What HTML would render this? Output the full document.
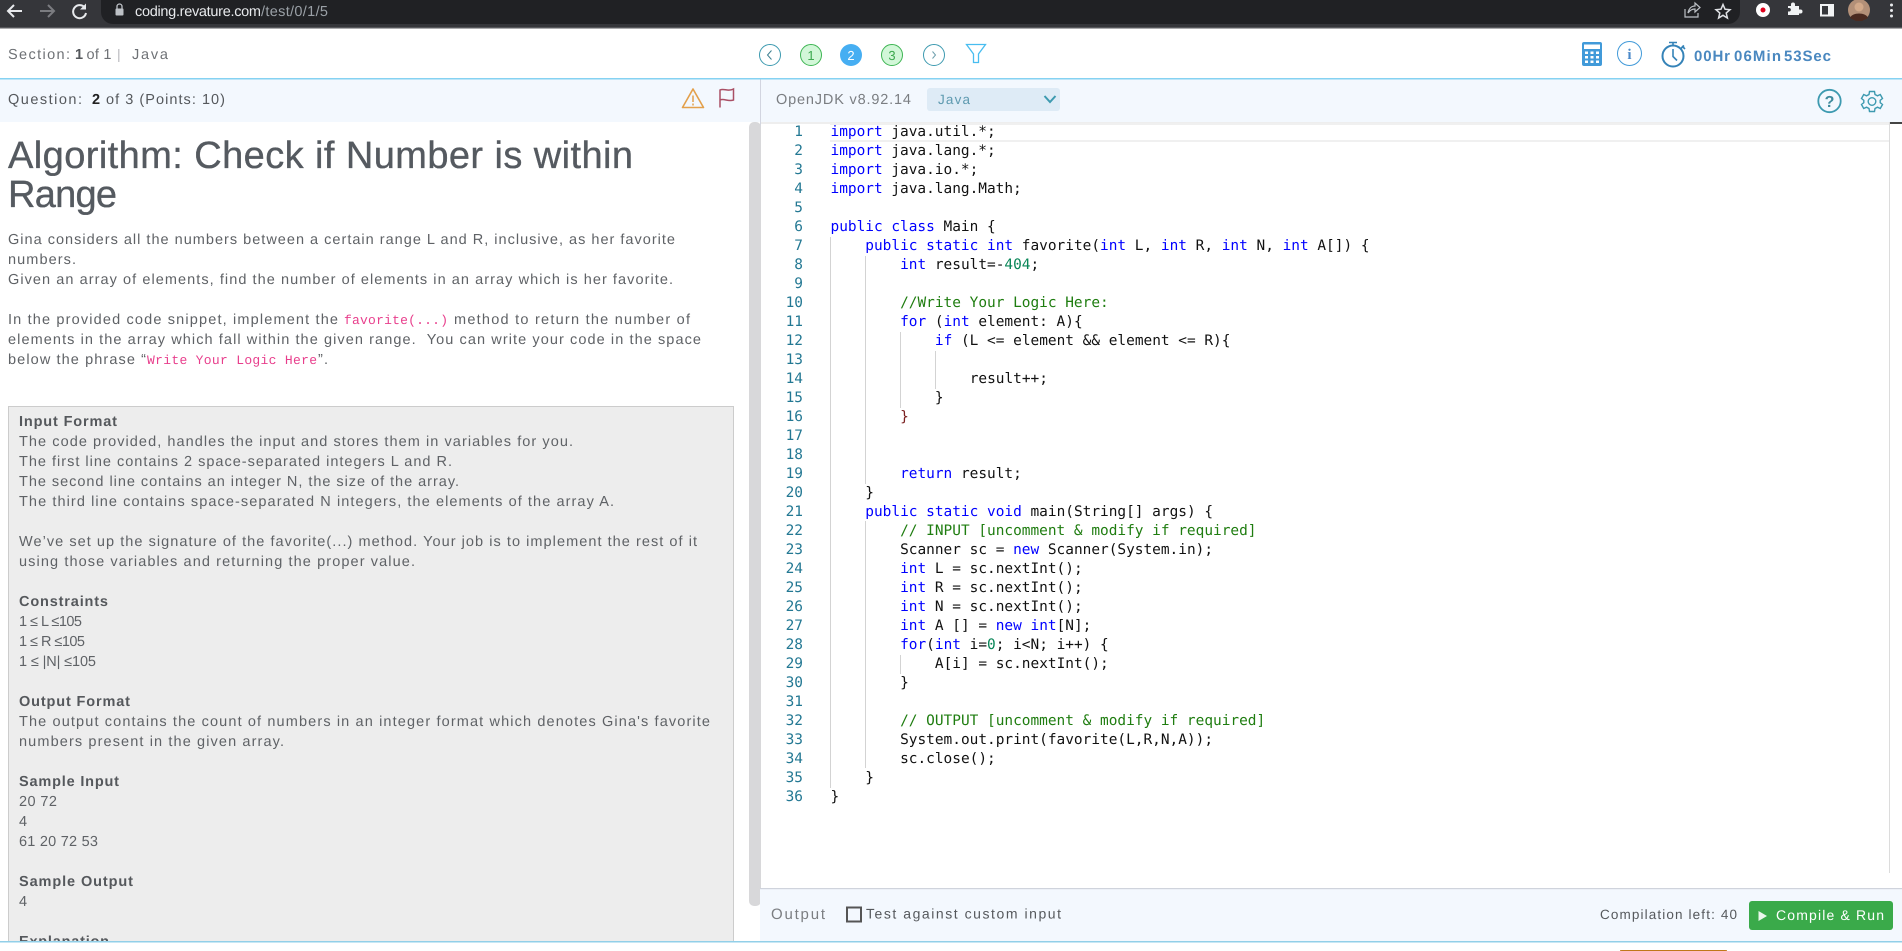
<!DOCTYPE html>
<html lang="en"><head><meta charset="utf-8"><title>Coding Test</title>
<style>
html,body{margin:0;padding:0;width:1902px;height:951px;overflow:hidden;background:#fff}
svg{display:block;position:absolute;left:0;top:0}
text{font-family:"Liberation Sans",sans-serif;white-space:pre;text-rendering:geometricPrecision}
.b{font-size:14.5px;fill:#5f6266}
.h{font-size:14.5px;font-weight:700;fill:#55585c}
.ttl{font-size:38px;fill:#555a60;stroke:#555a60;stroke-width:.35px}
.pk{font-family:"Liberation Mono",monospace;font-size:13px;fill:#e83e8c}
.c{font-family:"DejaVu Sans Mono","Liberation Mono",monospace;font-size:14.45px;fill:#111}
.k{fill:#0000ff}.g{fill:#1f7d10}.n{fill:#098658}
.ln{font-family:"DejaVu Sans Mono","Liberation Mono",monospace;font-size:14.45px;fill:#237893;text-anchor:end}
</style></head><body>
<svg width="1902" height="951" viewBox="0 0 1902 951" xmlns="http://www.w3.org/2000/svg">
<!-- browser chrome -->
<rect width="1902" height="27" fill="#35363a"/><rect y="27" width="1902" height="1.5" fill="#55565a"/>
<path d="M101 0H1740V12A12 12 0 0 1 1728 24H113A12 12 0 0 1 101 12Z" fill="#202124"/>
<path d="M22 11H8M14 5L8 11L14 17" fill="none" stroke="#e8eaed" stroke-width="2"/>
<path d="M40 11H54M48 5L54 11L48 17" fill="none" stroke="#7b7c80" stroke-width="2"/>
<path d="M85 8A6.5 6.5 0 1 0 86 13" fill="none" stroke="#e8eaed" stroke-width="2"/><path d="M86 3.5V9.5H80Z" fill="#e8eaed"/>
<rect x="115.5" y="8.5" width="8" height="7" rx="1" fill="#bdc1c6"/><path d="M117 9V6.500A2.500 2.500 0 0 1 122 6.500V9" fill="none" stroke="#bdc1c6" stroke-width="1.300"/>
<text x="135" y="16" font-size="14.500" fill="#e8eaed" textLength="126">coding.revature.com</text>
<text x="261" y="16" font-size="14.500" fill="#9aa0a6" textLength="67">/test/0/1/5</text>
<path d="M1685 9V17H1698V13M1688 13C1689 8 1692 6 1695 6V3L1700 7.500L1695 12V9C1692 9 1690 10 1688 13Z" fill="none" stroke="#bdc1c6" stroke-width="1.200"/>
<path d="M1723 4.500L1725 9.200L1730 9.700L1726.200 13L1727.400 18L1723 15.300L1718.600 18L1719.800 13L1716 9.700L1721 9.200Z" fill="none" stroke="#dfe1e5" stroke-width="1.500"/>
<circle cx="1763" cy="10" r="7" fill="#fff"/><circle cx="1763" cy="10" r="2.500" fill="#e0001b"/>
<path d="M1789 8H1792V6.500A2 2 0 0 1 1796 6.500V8H1800V11.500H1801.500A2 2 0 0 1 1801.500 15.500H1800V17H1789V13.500H1790.500A1.800 1.800 0 0 0 1790.500 10H1789Z" fill="#f1f3f4" transform="translate(-1 -2)"/>
<rect x="1820" y="4" width="14" height="12.500" fill="#f1f3f4"/><rect x="1822" y="6" width="6" height="8.500" fill="#35363a"/>
<circle cx="1859" cy="10" r="11" fill="#b39078"/><circle cx="1859" cy="7" r="4.500" fill="#d2a98a"/><path d="M1850 18C1852 12 1866 12 1868 18L1862 21H1856Z" fill="#4a2a20"/>
<circle cx="1891.500" cy="5" r="1.500" fill="#e8eaed"/><circle cx="1891.500" cy="10.500" r="1.500" fill="#e8eaed"/><circle cx="1891.500" cy="16" r="1.500" fill="#e8eaed"/>

<!-- header -->
<text x="8" y="59" font-size="14.500" fill="#6e7175" textLength="62">Section:</text>
<text x="75" y="59" font-size="14.500" font-weight="700" fill="#55585c">1</text>
<text x="86.500" y="59" font-size="14.500" fill="#6e7175" textLength="25">of 1</text>
<rect x="118" y="49" width="1.500" height="13" fill="#c8c8cc"/>
<text x="132" y="59" font-size="14.500" fill="#6e7175" textLength="36">Java</text>
<g fill="none" stroke-width="1">
<ellipse cx="770" cy="55" rx="10.500" ry="10.500" stroke="#3d9ab0"/><path d="M771.500 50.500L767.500 55L771.500 59.500" stroke="#3d7f90"/>
<circle cx="811" cy="55" r="10.500" fill="#d2f7d8" stroke="#3eb553"/>
<circle cx="851" cy="55" r="11" fill="#46aef2" stroke="none"/>
<circle cx="892" cy="55" r="10.500" fill="#d2f7d8" stroke="#3eb553"/>
<circle cx="934" cy="55" r="10.500" stroke="#3d9ab0"/><path d="M932.500 51.500L935.500 55L932.500 58.500" stroke="#6e9fad"/>
<path d="M966.500 44.500H985.500L978.500 54V62.500H973.500V54Z" stroke="#48bdf0" stroke-width="1.300"/>
</g>
<text x="811" y="60" font-size="13" fill="#3eaa50" text-anchor="middle">1</text>
<text x="851" y="60" font-size="13" fill="#fff" text-anchor="middle">2</text>
<text x="892" y="60" font-size="13" fill="#3eaa50" text-anchor="middle">3</text>
<rect x="1582" y="42" width="20" height="24" rx="2" fill="#419ad9"/>
<rect x="1584" y="44.500" width="16" height="4.500" fill="#fff"/>
<g fill="#fff"><rect x="1585" y="51.500" width="3" height="2.500"/><rect x="1590.500" y="51.500" width="3" height="2.500"/><rect x="1596" y="51.500" width="3" height="2.500"/><rect x="1585" y="56" width="3" height="2.500"/><rect x="1590.500" y="56" width="3" height="2.500"/><rect x="1596" y="56" width="3" height="2.500"/><rect x="1585" y="60.500" width="3" height="2.500"/><rect x="1590.500" y="60.500" width="3" height="2.500"/><rect x="1596" y="60.500" width="3" height="2.500"/></g>
<circle cx="1629.500" cy="53.500" r="12" fill="none" stroke="#419ad9" stroke-width="1"/>
<text x="1629.500" y="59" font-size="15" font-weight="700" fill="#4a88c8" text-anchor="middle" style="font-family:'Liberation Serif',serif">i</text>
<g fill="none" stroke="#3583b8"><circle cx="1673" cy="56" r="10.500" stroke-width="2"/><path d="M1669 42.500H1677M1673 43V46M1682 46L1685 49M1680.500 49L1684 45.500M1673 49V56.500L1677 60.500" stroke-width="1.600"/></g>
<text x="1694" y="61" font-size="15" font-weight="700" fill="#4a88c0" textLength="36">00Hr</text>
<text x="1734" y="61" font-size="15" font-weight="700" fill="#4a88c0" textLength="47">06Min</text>
<text x="1784" y="61" font-size="15" font-weight="700" fill="#4a88c0" textLength="47">53Sec</text>
<rect y="78" width="1902" height="1.500" fill="#85d2f2"/>

<!-- toolbar strip -->
<rect y="79.500" width="1902" height="42.500" fill="#f3f8fe"/>
<rect x="760" y="79.500" width="1" height="809" fill="#d2d5e0"/>
<text x="8" y="104" font-size="14.500" fill="#55585c" textLength="74">Question:</text>
<text x="92" y="104" font-size="14.500" font-weight="700" fill="#222">2</text>
<text x="106" y="104" font-size="14.500" fill="#55585c" textLength="119">of 3 (Points: 10)</text>
<path d="M693 89L703.500 107.500H682.500Z" fill="none" stroke="#e3a04b" stroke-width="1.600" stroke-linejoin="round"/>
<path d="M693 95.500V102M693 103.500V105.500" stroke="#e3a04b" stroke-width="1.500"/>
<path d="M720 107.500V90C724 88 728 92 733.500 89V100C728 102 724 98 720 100" fill="none" stroke="#a94f65" stroke-width="1.500"/>
<text x="776" y="104" font-size="14.500" fill="#7b7e82" textLength="135">OpenJDK v8.92.14</text>
<rect x="927" y="88" width="133" height="23" rx="3" fill="#deebf6"/>
<text x="938" y="104" font-size="13.500" fill="#5e9ab0" textLength="32">Java</text>
<path d="M1044.500 96L1050 102L1055.500 96" fill="none" stroke="#3d9ab0" stroke-width="2"/>
<circle cx="1829.500" cy="101" r="11.200" fill="none" stroke="#3d9ab0" stroke-width="1.800"/>
<text x="1829.500" y="107" font-size="16" font-weight="700" fill="#3d8a9c" text-anchor="middle">?</text>
<g fill="none" stroke="#3d9ab0" stroke-width="1.400"><circle cx="1872" cy="101.500" r="3.800"/>
<path d="M1869.500 91.500H1874.500L1875 94.500L1877.500 95.800L1880.300 94.500L1882.500 98.500L1880.200 100.300V102.700L1882.500 104.500L1880.300 108.500L1877.500 107.200L1875 108.500L1874.500 111.500H1869.500L1869 108.500L1866.500 107.200L1863.700 108.500L1861.500 104.500L1863.800 102.700V100.300L1861.500 98.500L1863.700 94.500L1866.500 95.800L1869 94.500Z"/></g>

<!-- left panel -->
<rect x="749" y="122" width="12" height="784" rx="5" fill="#d8d8da"/>
<text class="ttl" x="8" y="168" textLength="625">Algorithm: Check if Number is within</text>
<text class="ttl" x="8" y="207" textLength="109">Range</text>
<text class="b" x="8" y="244" textLength="667">Gina considers all the numbers between a certain range L and R, inclusive, as her favorite</text>
<text class="b" x="8" y="264" textLength="68">numbers.</text>
<text class="b" x="8" y="284" textLength="665">Given an array of elements, find the number of elements in an array which is her favorite.</text>
<text class="b" x="8" y="324" textLength="330">In the provided code snippet, implement the</text>
<text class="pk" x="344" y="324" textLength="104">favorite(...)</text>
<text class="b" x="454" y="324" textLength="236">method to return the number of</text>
<text class="b" x="8" y="344" textLength="693">elements in the array which fall within the given range.  You can write your code in the space</text>
<text class="b" x="8" y="364" textLength="138">below the phrase “</text>
<text class="pk" x="147" y="364" textLength="170">Write Your Logic Here</text>
<text class="b" x="318" y="364" textLength="10">”.</text>
<rect x="8.500" y="406.500" width="725" height="540" fill="#ededed" stroke="#ccc"/>
<text class="h" x="19" y="426" textLength="98">Input Format</text>
<text class="b" x="19" y="446" textLength="554">The code provided, handles the input and stores them in variables for you.</text>
<text class="b" x="19" y="466" textLength="433">The first line contains 2 space-separated integers L and R.</text>
<text class="b" x="19" y="486" textLength="440">The second line contains an integer N, the size of the array.</text>
<text class="b" x="19" y="506" textLength="595">The third line contains space-separated N integers, the elements of the array A.</text>
<text class="b" x="19" y="546" textLength="678">We’ve set up the signature of the favorite(...) method. Your job is to implement the rest of it</text>
<text class="b" x="19" y="566" textLength="396">using those variables and returning the proper value.</text>
<text class="h" x="19" y="606" textLength="89">Constraints</text>
<text class="b" x="19" y="626" textLength="63">1 ≤ L ≤105</text>
<text class="b" x="19" y="646" textLength="66">1 ≤ R ≤105</text>
<text class="b" x="19" y="666" textLength="77">1 ≤ |N| ≤105</text>
<text class="h" x="19" y="706" textLength="111">Output Format</text>
<text class="b" x="19" y="726" textLength="691">The output contains the count of numbers in an integer format which denotes Gina's favorite</text>
<text class="b" x="19" y="746" textLength="265">numbers present in the given array.</text>
<text class="h" x="19" y="786" textLength="100">Sample Input</text>
<text class="b" x="19" y="806" textLength="38">20 72</text>
<text class="b" x="19" y="826">4</text>
<text class="b" x="19" y="846" textLength="79">61 20 72 53</text>
<text class="h" x="19" y="886" textLength="114">Sample Output</text>
<text class="b" x="19" y="906">4</text>
<text class="h" x="19" y="946" textLength="90">Explanation</text>
<rect x="0" y="941" width="760" height="10" fill="#fff"/>

<!-- editor -->
<rect x="761" y="122" width="1141" height="2" fill="#eee"/>
<rect x="830" y="123" width="1060" height="2" fill="#f0f0f0"/><rect x="830" y="140" width="1060" height="2" fill="#f0f0f0"/>
<rect x="1889" y="122" width="1" height="751" fill="#dcdcdc"/><rect x="1890" y="122" width="12" height="2" fill="#444"/>
<g fill="#d3d3d3">
<rect x="830" y="237" width="1" height="551"/>
<rect x="865" y="256" width="1" height="228"/><rect x="865" y="521" width="1" height="247"/>
<rect x="900" y="332" width="1" height="76"/><rect x="900" y="655" width="1" height="19"/>
<rect x="935" y="351" width="1" height="38"/>
</g>
<g class="lnums">
<text class="ln" x="803" y="136">1</text><text class="ln" x="803" y="155">2</text><text class="ln" x="803" y="174">3</text><text class="ln" x="803" y="193">4</text><text class="ln" x="803" y="212">5</text><text class="ln" x="803" y="231">6</text><text class="ln" x="803" y="250">7</text><text class="ln" x="803" y="269">8</text><text class="ln" x="803" y="288">9</text><text class="ln" x="803" y="307">10</text><text class="ln" x="803" y="326">11</text><text class="ln" x="803" y="345">12</text><text class="ln" x="803" y="364">13</text><text class="ln" x="803" y="383">14</text><text class="ln" x="803" y="402">15</text><text class="ln" x="803" y="421">16</text><text class="ln" x="803" y="440">17</text><text class="ln" x="803" y="459">18</text><text class="ln" x="803" y="478">19</text><text class="ln" x="803" y="497">20</text><text class="ln" x="803" y="516">21</text><text class="ln" x="803" y="535">22</text><text class="ln" x="803" y="554">23</text><text class="ln" x="803" y="573">24</text><text class="ln" x="803" y="592">25</text><text class="ln" x="803" y="611">26</text><text class="ln" x="803" y="630">27</text><text class="ln" x="803" y="649">28</text><text class="ln" x="803" y="668">29</text><text class="ln" x="803" y="687">30</text><text class="ln" x="803" y="706">31</text><text class="ln" x="803" y="725">32</text><text class="ln" x="803" y="744">33</text><text class="ln" x="803" y="763">34</text><text class="ln" x="803" y="782">35</text><text class="ln" x="803" y="801">36</text>
</g>
<g>
<text class="c" x="830.500" y="136"><tspan class="k">import</tspan> java.util.*;</text>
<text class="c" x="830.500" y="155"><tspan class="k">import</tspan> java.lang.*;</text>
<text class="c" x="830.500" y="174"><tspan class="k">import</tspan> java.io.*;</text>
<text class="c" x="830.500" y="193"><tspan class="k">import</tspan> java.lang.Math;</text>
<text class="c" x="830.500" y="231"><tspan class="k">public</tspan> <tspan class="k">class</tspan> Main {</text>
<text class="c" x="865.300" y="250"><tspan class="k">public</tspan> <tspan class="k">static</tspan> <tspan class="k">int</tspan> favorite(<tspan class="k">int</tspan> L, <tspan class="k">int</tspan> R, <tspan class="k">int</tspan> N, <tspan class="k">int</tspan> A[]) {</text>
<text class="c" x="900.100" y="269"><tspan class="k">int</tspan> result=-<tspan class="n">404</tspan>;</text>
<text class="c g" x="900.100" y="307">//Write Your Logic Here:</text>
<text class="c" x="900.100" y="326"><tspan class="k">for</tspan> (<tspan class="k">int</tspan> element: A){</text>
<text class="c" x="934.900" y="345"><tspan class="k">if</tspan> (L &lt;= element &amp;&amp; element &lt;= R){</text>
<text class="c" x="969.700" y="383">result++;</text>
<text class="c" x="934.900" y="402">}</text>
<text class="c" x="900.100" y="421" fill="#7a1f1f" style="fill:#7a1f1f">}</text>
<text class="c" x="900.100" y="478"><tspan class="k">return</tspan> result;</text>
<text class="c" x="865.300" y="497">}</text>
<text class="c" x="865.300" y="516"><tspan class="k">public</tspan> <tspan class="k">static</tspan> <tspan class="k">void</tspan> main(String[] args) {</text>
<text class="c g" x="900.100" y="535">// INPUT [uncomment &amp; modify if required]</text>
<text class="c" x="900.100" y="554">Scanner sc = <tspan class="k">new</tspan> Scanner(System.in);</text>
<text class="c" x="900.100" y="573"><tspan class="k">int</tspan> L = sc.nextInt();</text>
<text class="c" x="900.100" y="592"><tspan class="k">int</tspan> R = sc.nextInt();</text>
<text class="c" x="900.100" y="611"><tspan class="k">int</tspan> N = sc.nextInt();</text>
<text class="c" x="900.100" y="630"><tspan class="k">int</tspan> A [] = <tspan class="k">new</tspan> <tspan class="k">int</tspan>[N];</text>
<text class="c" x="900.100" y="649"><tspan class="k">for</tspan>(<tspan class="k">int</tspan> i=<tspan class="n">0</tspan>; i&lt;N; i++) {</text>
<text class="c" x="934.900" y="668">A[i] = sc.nextInt();</text>
<text class="c" x="900.100" y="687">}</text>
<text class="c g" x="900.100" y="725">// OUTPUT [uncomment &amp; modify if required]</text>
<text class="c" x="900.100" y="744">System.out.print(favorite(L,R,N,A));</text>
<text class="c" x="900.100" y="763">sc.close();</text>
<text class="c" x="865.300" y="782">}</text>
<text class="c" x="830.500" y="801">}</text>
</g>

<!-- output bar -->
<rect x="760" y="888" width="1142" height="53" fill="#f3f8fe"/>
<rect x="760" y="888" width="1142" height="1.200" fill="#cfd3dc"/>
<rect y="941" width="1902" height="1.500" fill="#92cfe8"/>
<text x="771" y="919" font-size="15" fill="#7b7e82" textLength="54">Output</text>
<rect x="847" y="907.500" width="14" height="14" fill="none" stroke="#555" stroke-width="2"/>
<text x="866" y="918.500" font-size="14" fill="#55585c" textLength="195">Test against custom input</text>
<text x="1600" y="919" font-size="13.500" fill="#55585c" textLength="137">Compilation left: 40</text>
<rect x="1749" y="901" width="144" height="29" rx="3" fill="#3aaa4a"/>
<path d="M1758.500 911L1767 916L1758.500 921Z" fill="#eaf7ec"/>
<text x="1776" y="920" font-size="14" fill="#fff" textLength="108">Compile &amp; Run</text>
<path d="M1620 951V950.500Q1620 950 1622 950H1725Q1727 950 1727 950.500V951Z" fill="#c0781a"/>
</svg>
</body></html>
